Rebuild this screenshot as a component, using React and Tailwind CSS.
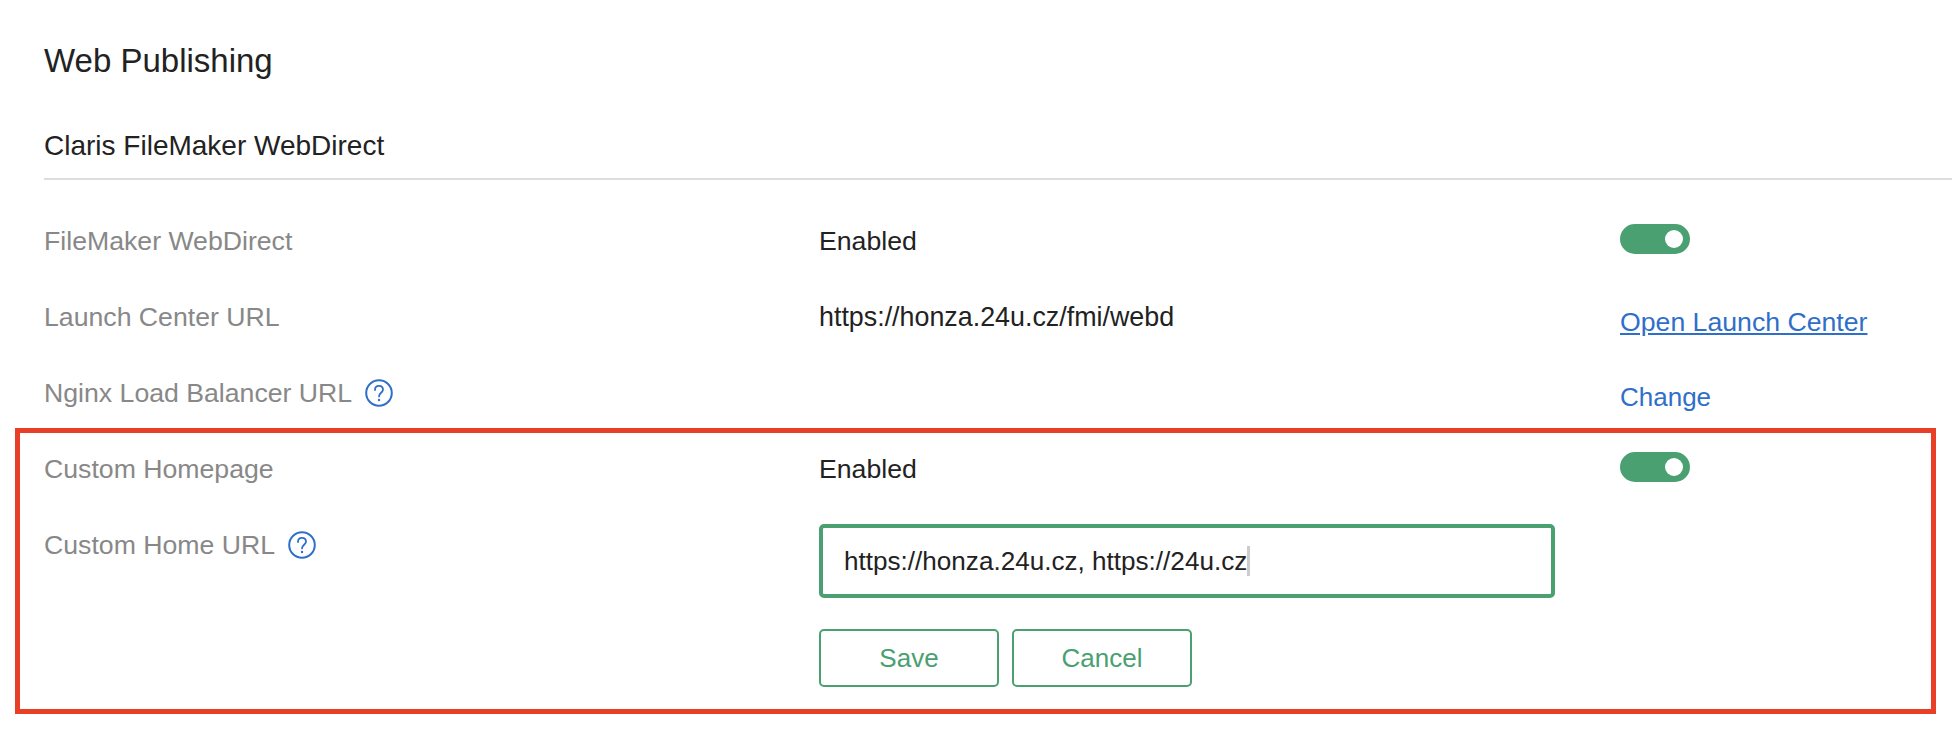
import React from 'react';

const rowClass = 'grid grid-cols-[775px_801px_1fr] items-center h-[36px]';
const labelClass = 'flex items-center text-[#888888]';

const HelpIcon = ({ className = '' }) => (
    <svg viewBox="0 0 28 28" className={`w-[28px] h-[28px] shrink-0 ${className}`} fill="none" stroke="#2f6fc9">
        <circle cx="14" cy="14" r="12.8" strokeWidth="2" />
        <path d="M10 11c0-2.6 1.7-4.2 4-4.2s4 1.6 4 3.8c0 3-4 3.4-4 6.8" strokeWidth="1.8" strokeLinecap="round" />
        <circle cx="14" cy="21" r="1.2" fill="#2f6fc9" stroke="none" />
    </svg>
);

const Toggle = () => (
    <div className="flex items-center justify-end w-[70px] h-[30px] mb-[4px] pr-[7px] rounded-full bg-[#4aa071]">
        <div className="w-[18px] h-[18px] rounded-full bg-white"></div>
    </div>
);

const App = () => {
    return (
        <div className="h-[754px] bg-white overflow-hidden text-[26.67px] leading-[36px] text-[#222222] font-['Liberation_Sans',Arial,sans-serif]">
            <div className="pl-[44px] pt-[38px]">
                <h1 className="text-[33px] leading-[46px] font-normal">Web Publishing</h1>
                <h2 className="mt-[47px] mb-[17px] text-[28px] leading-[30px] font-normal">Claris FileMaker WebDirect</h2>
                <div className="h-[2px] bg-[#dddddd]"></div>

                <div className={`${rowClass} mt-[43px]`}>
                    <div className={labelClass}>FileMaker WebDirect</div>
                    <div>Enabled</div>
                    <Toggle />
                </div>
                <div className={`${rowClass} mt-[40px]`}>
                    <div className={labelClass}>Launch Center URL</div>
                    <div className="text-[26.85px]">https://honza.24u.cz/fmi/webd</div>
                    <a href="#" className="mt-[10px] leading-[26px] text-[#2f6fc9] underline">Open Launch Center</a>
                </div>
                <div className={`${rowClass} mt-[40px]`}>
                    <div className={labelClass}>
                        Nginx Load Balancer URL
                        <HelpIcon className="ml-[13px]" />
                    </div>
                    <div></div>
                    <a href="#" className="mt-[8px] leading-[26px] text-[26px] text-[#2f6fc9]">Change</a>
                </div>
            </div>

            <div className="ml-[15px] w-[1921px] mt-[17px] h-[286px] border-[5px] border-[#e83f26] pl-[24px] pt-[18px]">
                <div className={rowClass}>
                    <div className={labelClass}>Custom Homepage</div>
                    <div>Enabled</div>
                    <Toggle />
                </div>
                <div className="grid grid-cols-[775px_801px_1fr] mt-[37px]">
                    <div className={`${labelClass} h-[36px] mt-[3px]`}>
                        Custom Home URL
                        <HelpIcon className="ml-[13px]" />
                    </div>
                    <div>
                        <div className="flex items-center w-[736px] h-[74px] pl-[21px] border-[4px] border-[#4aa071] rounded-[5px] text-[26.1px]">
                            <span>https://honza.24u.cz, https://24u.cz</span>
                            <span className="w-[3px] h-[30px] bg-[#cccccc]"></span>
                        </div>
                        <div className="flex gap-[13px] mt-[31px]">
                            <button className="w-[180px] h-[58px] border-2 border-[#4aa071] rounded-[5px] text-[26px] text-[#4aa071]">Save</button>
                            <button className="w-[180px] h-[58px] border-2 border-[#4aa071] rounded-[5px] text-[26px] text-[#4aa071]">Cancel</button>
                        </div>
                    </div>
                </div>
            </div>
        </div>
    );
};

export default App;
